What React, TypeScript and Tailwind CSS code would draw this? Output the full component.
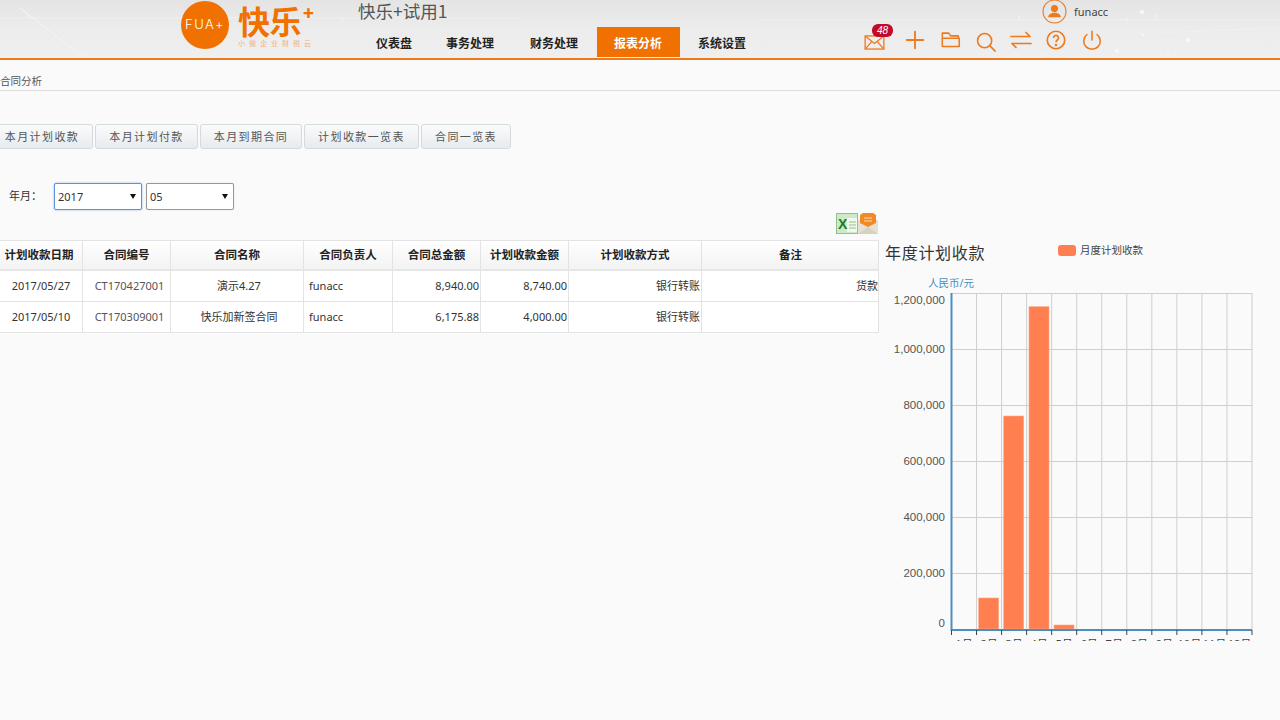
import React from "react";

const cjk = "font-['Noto_Sans','Noto_Sans_CJK_SC',sans-serif]";
const O = "#ee7a1e";

function Icon({ children, className = "" }: { children: React.ReactNode; className?: string }) {
  return (
    <svg viewBox="0 0 24 24" fill="none" stroke={O} strokeWidth={1.7} strokeLinecap="round" strokeLinejoin="round" className={className}>
      {children}
    </svg>
  );
}

function Logo() {
  return (
    <div className="flex items-start w-[177px] pt-px">
      <div className="w-[48px] h-[48px] rounded-full bg-[#f07100] flex items-center justify-center shrink-0">
        <span className="text-white text-[13px] font-['Inter',sans-serif] font-light tracking-[1.5px]">FUA+</span>
      </div>
      <div className="ml-[9px] flex flex-col">
        <div className="flex items-start h-[37px] pt-[1px]">
          <span className="text-[#f07100] text-[32px] leading-[36px] font-bold font-['Noto_Sans_CJK_SC',sans-serif] tracking-[-0.5px]">快乐</span>
          <span className="text-[#f07100] text-[19px] leading-[20px] font-bold font-['Inter',sans-serif] mt-[1px] ml-[1px]">+</span>
        </div>
        <span className="text-[#eeb184] text-[7px] leading-[10px] tracking-[4px] whitespace-nowrap font-['Noto_Sans_CJK_SC',sans-serif]">小微企业财税云</span>
      </div>
    </div>
  );
}

const navs = [
  { t: "仪表盘", w: "w-[70px] pl-[18px]" },
  { t: "事务处理", w: "w-[84px] pl-[18px]" },
  { t: "财务处理", w: "w-[84px] pl-[18px]" },
  { t: "报表分析", w: "w-[83px] pl-[17px] ml-px bg-[#f07100] text-white" },
  { t: "系统设置", w: "w-[84px] pl-[18px]" },
];

const sparkles = [
  [342, 20, 0.8], [1142, 12, 2], [1188, 40, 2], [1117, 51, 2], [1143, 35, 1], [1168, 53, 1], [1127, 19, 0.8], [1157, 16, 1],
  [1019, 17, 0.8], [1045, 53, 0.8], [450, 52, 0.8], [395, 50, 0.8],
];

function Header() {
  return (
    <header className="relative h-[60px] border-b-2 border-[#ee7a1e] bg-gradient-to-b from-[#e4e4e4] via-[#ececec] to-[#efefef] flex pl-[181px] overflow-hidden">
      <svg width="1280" height="58" className="absolute left-0 top-0">
        <path d="M20 8L82 56" stroke="#f2f2f2" strokeWidth="1.2" />
        <path d="M0 18H520M760 20H1280M1130 34L1280 28" stroke="#f0f0f0" strokeWidth="1" />
        {sparkles.map(([x, y, r]) => (
          <circle key={`${x}-${y}`} cx={x} cy={y} r={r} fill="#f8f8f8" />
        ))}
      </svg>
      <div className="relative flex">
        <Logo />
        <div className="w-[506px] flex flex-col">
          <div className="h-[27px] text-[17.5px] leading-[22px] text-[#555] font-['Noto_Sans_CJK_SC',sans-serif]">快乐+试用1</div>
          <nav className="flex h-[30px]">
            {navs.map((n) => (
              <div key={n.t} className={`${n.w} pt-[3px] flex items-center text-[12px] font-bold whitespace-nowrap text-[#222]`}>
                <span className={n.t === "报表分析" ? "text-white" : ""}>{n.t}</span>
              </div>
            ))}
          </nav>
        </div>
        <div className="w-[250px] flex flex-col">
          <div className="h-[25px] flex items-start pl-[178px]">
            <svg viewBox="0 0 24 24" className="w-[25px] h-[25px] shrink-0 mt-[-1px]" fill="none">
              <circle cx="12" cy="12" r="11" stroke={O} strokeWidth="1.1" />
              <circle cx="12" cy="9.2" r="3.4" fill={O} />
              <path d="M5.8 17.5c.4-3 3-4.4 6.2-4.4s5.8 1.4 6.2 4.4z" fill={O} />
            </svg>
            <span className="ml-[7px] text-[11px] leading-[24px] text-[#444]">funacc</span>
          </div>
          <div className="flex items-center h-[28px] mt-px">
            <div className="relative w-[42px] h-[28px] flex items-center">
              <svg viewBox="0 0 22 16" className="w-[21px] h-[15px] mt-[5px]" fill="none" stroke={O} strokeWidth="1.4">
                <rect x="1" y="1" width="20" height="14" />
                <path d="M1 1l10 8 10-8M1 15l7-8M21 15l-7-8" />
              </svg>
              <span className="absolute left-[8px] top-[-2px] w-[21px] h-[13px] rounded-[6px] bg-[#c20a2b] text-white text-[10px] leading-[13px] italic text-center font-['Liberation_Sans',sans-serif]">48</span>
            </div>
            <Icon className="w-[22px] h-[22px] ml-[-2px]">
              <path d="M12 3v18M3 12h18" strokeWidth="2" />
            </Icon>
            <Icon className="w-[22px] h-[22px] ml-[14px]">
              <path d="M2.5 19V4.5h7l2 3H20V10M2.5 19h18.5V10H2.5z" />
            </Icon>
            <Icon className="w-[22px] h-[22px] ml-[13px] mt-[3px]">
              <circle cx="10.5" cy="10.5" r="7.7" />
              <path d="M16 16l6 6" />
            </Icon>
            <Icon className="w-[24px] h-[24px] ml-[12px]">
              <path d="M2 8.5h19M17 4.5l4 4M22 15.5H3M7 19.5l-4-4" />
            </Icon>
            <svg viewBox="0 0 24 24" className="w-[20px] h-[20px] ml-[13px]" fill="none" stroke={O} strokeWidth="2">
              <circle cx="12" cy="12" r="10.5" />
              <path d="M9 9.5a3 3 0 1 1 4.6 2.5c-1 .7-1.6 1.3-1.6 2.6" />
              <circle cx="12" cy="18" r=".6" fill={O} />
            </svg>
            <Icon className="w-[22px] h-[22px] ml-[15px]">
              <path d="M12 2.5V12M6.5 6a9 9 0 1 0 11 0" />
            </Icon>
          </div>
        </div>
      </div>
    </header>
  );
}

const tabs = [
  ["本月计划收款", "w-[102px]"],
  ["本月计划付款", "w-[103px]"],
  ["本月到期合同", "w-[102px]"],
  ["计划收款一览表", "w-[115px]"],
  ["合同一览表", "w-[90px]"],
];

function Select({ v, focus }: { v: string; focus?: boolean }) {
  return (
    <div
      className={`w-[88px] h-[27px] bg-white flex items-center justify-between pl-[3px] pr-[5px] pt-px text-[11px] text-[#333] rounded-[2px] ${
        focus ? "border border-[#5b93dc] shadow-[0_0_2px_#7eaeea]" : "border border-[#999] shadow-[0_0_1px_#bbb]"
      }`}
    >
      <span>{v}</span>
      <span className="w-0 h-0 border-x-[3px] border-x-transparent border-t-[5px] border-t-[#111] -mt-[2px]" />
    </div>
  );
}

const cols = ["w-[83px]", "w-[88px]", "w-[133px]", "w-[89px]", "w-[88px]", "w-[88px]", "w-[133px]", "w-[177px]"];
const heads = ["计划收款日期", "合同编号", "合同名称", "合同负责人", "合同总金额", "计划收款金额", "计划收款方式", "备注"];
const rows = [
  ["2017/05/27", "CT170427001", "演示4.27", "funacc", "8,940.00", "8,740.00", "银行转账", "货款"],
  ["2017/05/10", "CT170309001", "快乐加新签合同", "funacc", "6,175.88", "4,000.00", "银行转账", ""],
];
const aligns = [
  "text-center",
  "text-center pl-[6px] text-[#555]",
  "text-center pl-[4px] text-[10.5px]",
  "text-left pl-[5px]",
  "text-right pr-px",
  "text-right pr-px",
  "text-right pr-px",
  "text-right pr-px",
];

function Table() {
  return (
    <div className="border-t border-b border-r border-[#e3e3e3] w-[879px]">
      <div className="flex h-[30px] bg-gradient-to-b from-white to-[#f3f3f3] border-b-2 border-[#e6e6e6]">
        {heads.map((h, i) => (
          <div
            key={h}
            className={`${cols[i]} ${i === 0 ? "pr-[4px]" : ""} shrink-0 border-r border-[#e3e3e3] last:border-r-0 flex items-center justify-center text-[11.5px] font-bold text-[#222]`}
          >
            {h}
          </div>
        ))}
      </div>
      {rows.map((r, ri) => (
        <div key={ri} className={`flex bg-white ${ri === 0 ? "h-[31px] border-b border-[#e3e3e3]" : "h-[30px]"}`}>
          {r.map((c, i) => (
            <div
              key={i}
              className={`${cols[i]} shrink-0 border-r border-[#e3e3e3] last:border-r-0 leading-[29px] text-[11px] text-[#333] whitespace-nowrap ${aligns[i]}`}
            >
              {c}
            </div>
          ))}
        </div>
      ))}
    </div>
  );
}

const xs = Array.from({ length: 13 }, (_, i) => 66.5 + i * 25.04);
const ys = [28.5, 84.5, 140.5, 196.5, 252.5, 308.5];
const yLabels: [string, number][] = [
  ["1,200,000", 39],
  ["1,000,000", 88],
  ["800,000", 144],
  ["600,000", 200],
  ["400,000", 256],
  ["200,000", 312],
  ["0", 362],
];
const bars = [
  [93.7, 333],
  [118.7, 151],
  [144, 41.7],
  [169, 360],
];

function Chart() {
  return (
    <div className="w-[395px] ml-[7px] pt-[35px] shrink-0">
      <div className="flex h-[26px]">
        <span className="text-[16px] leading-[27px] text-[#333] tracking-[0.7px] w-[173px]">年度计划收款</span>
        <span className="w-[18px] h-[11px] mt-[5px] rounded-[3px] bg-[#ff7f50]" />
        <span className="ml-[4px] text-[10.5px] leading-[20px] text-[#444]">月度计划收款</span>
      </div>
      <svg width="395" height="376" viewBox="0 0 395 376" className="block -mt-[1px]">
        <text x="43" y="22" fontSize="10.5" fill="#4a8fbf">人民币/元</text>
        {ys.map((y) => (
          <line key={y} x1="66" x2="367" y1={y} y2={y} stroke="#cfcfcf" />
        ))}
        {xs.slice(1).map((x) => (
          <line key={x} x1={x} x2={x} y1="28" y2="365" stroke="#cfcfcf" />
        ))}
        {bars.map(([x, y]) => (
          <rect key={x} x={x} y={y} width="20" height={364 - y} fill="#ff7f50" stroke="#ffa98a" strokeWidth="0.6" />
        ))}
        <line x1="66.5" x2="66.5" y1="28" y2="366" stroke="#4a8fbf" strokeWidth="2" />
        <line x1="66" x2="367" y1="365" y2="365" stroke="#4a8fbf" strokeWidth="2" />
        {xs.map((x) => (
          <line key={x} x1={x} x2={x} y1="365" y2="370" stroke="#444" />
        ))}
        {yLabels.map(([t, y]) => (
          <text key={t} x="60" y={y} textAnchor="end" fontSize="11.5" fill="#555" fontFamily="Liberation Sans">
            {t}
          </text>
        ))}
        {xs.slice(0, 12).map((x, i) => (
          <text key={x} x={x + 12.5} y="383" textAnchor="middle" fontSize="11" fill="#444">
            {i + 1}月
          </text>
        ))}
      </svg>
    </div>
  );
}

export default function App() {
  return (
    <div className={`w-[1280px] h-[720px] overflow-hidden bg-[#fafafa] ${cjk}`}>
      <Header />
      <div className="h-[31px] border-b border-[#dedede] text-[10.5px] leading-[43px] text-[#555]">合同分析</div>
      <div className="flex gap-[2px] mt-[33px] ml-[-9px]">
        {tabs.map(([t, w]) => (
          <div
            key={t}
            className={`${w} h-[25px] pt-px rounded-[3px] border border-[#d5dade] bg-gradient-to-b from-[#fbfbfb] to-[#e7ebee] flex items-center justify-center text-[11px] tracking-[1.4px] text-[#555]`}
          >
            {t}
          </div>
        ))}
      </div>
      <div className="flex items-center mt-[34px] h-[27px]">
        <span className="ml-[9px] w-[45px] text-[11px] text-[#333]">年月：</span>
        <Select v="2017" focus />
        <span className="w-[4px]" />
        <Select v="05" />
      </div>
      <div className="flex">
        <div className="w-[878px] shrink-0">
          <div className="flex justify-end h-[30px] pt-[3px]">
            <svg viewBox="0 0 22 21" className="w-[22px] h-[21px]">
              <rect width="22" height="21" fill="#8cc48a" />
              <rect x="1" y="1" width="20" height="19" fill="#cfe8c8" />
              <rect x="11" y="5" width="10" height="14" fill="#f3f8ef" />
              <path d="M13 9h7M13 12h7M13 15h7" stroke="#8cc48a" />
              <text x="2" y="16" fontSize="14" fontWeight="bold" fill="#1d7a2b" fontFamily="Liberation Sans">X</text>
            </svg>
            <svg viewBox="0 0 20 21" className="w-[20px] h-[21px]">
              <rect y="7" width="20" height="14" fill="#e5e1d4" />
              <path d="M0 21l10-7 10 7" fill="#d6d1c0" />
              <path d="M2 2l3-2h10l3 2v8l-8 4-8-4z" fill="#f08a24" />
              <path d="M6 5h8M6 8h8" stroke="#fbd9a8" />
            </svg>
          </div>
          <Table />
        </div>
        <div className="-mt-[5px]">
          <Chart />
        </div>
      </div>
    </div>
  );
}
